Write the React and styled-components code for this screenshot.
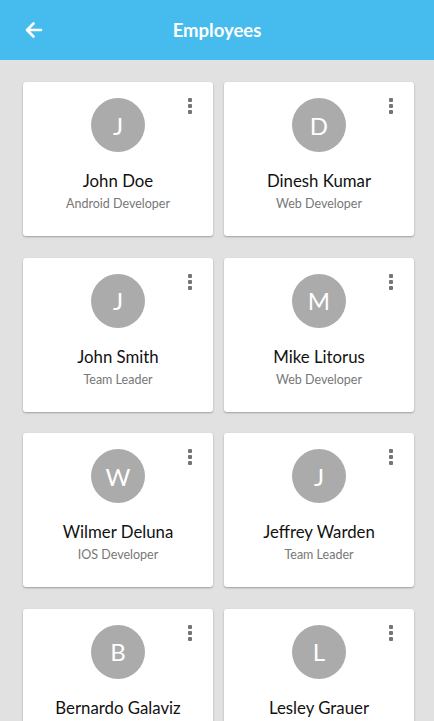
import React from 'react'
import styled, { createGlobalStyle } from 'styled-components'

const GlobalStyle = createGlobalStyle`
    body {
        margin: 0;
        background: #e1e1e1;
        font-family: Lato, "Open Sans", sans-serif;
        overflow: hidden;
    }
`;

const Page = styled.div`
    width: 434px;
    height: 721px;
    display: flex;
    flex-direction: column;
    background: #e1e1e1;
    overflow: hidden;
`;

const Header = styled.header`
    height: 60px;
    flex-shrink: 0;
    background: #46bbee;
    display: flex;
    align-items: center;
    position: relative;
`;

const BackButton = styled.button`
    border: none;
    background: transparent;
    padding: 0;
    margin-left: 24px;
    width: 20px;
    height: 20px;
    display: flex;
    align-items: center;
    justify-content: center;
    color: #fff;
`;

const Title = styled.h1`
    position: absolute;
    left: 0;
    right: 0;
    text-align: center;
    margin: 0;
    font-size: 18.5px;
    font-weight: 700;
    color: #fff;
    pointer-events: none;
`;

const Grid = styled.div`
    display: grid;
    grid-template-columns: 190px 190px;
    column-gap: 11px;
    row-gap: 21.5px;
    padding: 22px 20px 0 23px;
`;

const Card = styled.div`
    position: relative;
    height: 154px;
    background: #fff;
    border-radius: 3px;
    box-shadow: 0 1px 2px rgba(0, 0, 0, 0.3);
    display: flex;
    flex-direction: column;
    align-items: center;
    padding-top: 16px;
    box-sizing: border-box;
`;

const Avatar = styled.div`
    width: 54px;
    height: 54px;
    border-radius: 50%;
    background: #ababab;
    color: #fff;
    font-size: 24px;
    display: flex;
    align-items: center;
    justify-content: center;
`;

const Name = styled.div`
    margin-top: 18px;
    font-size: 16.8px;
    line-height: 21px;
    color: #111;
`;

const Role = styled.div`
    margin-top: 5px;
    font-size: 12.5px;
    line-height: 16px;
    color: #777;
`;

const MenuDots = styled.div`
    position: absolute;
    top: 16px;
    right: 21px;
    display: flex;
    flex-direction: column;
    gap: 2px;
`;

const Dot = styled.span`
    width: 4px;
    height: 4px;
    background: #757575;
    border-radius: 1px;
`;

const employees = [
    { name: 'John Doe', role: 'Android Developer' },
    { name: 'Dinesh Kumar', role: 'Web Developer' },
    { name: 'John Smith', role: 'Team Leader' },
    { name: 'Mike Litorus', role: 'Web Developer' },
    { name: 'Wilmer Deluna', role: 'IOS Developer' },
    { name: 'Jeffrey Warden', role: 'Team Leader' },
    { name: 'Bernardo Galaviz', role: 'Web Developer' },
    { name: 'Lesley Grauer', role: 'Team Leader' },
]

function EmployeeCard({ employee }) {
    return (
        <Card>
            <MenuDots>
                <Dot />
                <Dot />
                <Dot />
            </MenuDots>
            <Avatar>{employee.name[0]}</Avatar>
            <Name>{employee.name}</Name>
            <Role>{employee.role}</Role>
        </Card>
    )
}

export default function App() {
    return (
        <Page>
            <GlobalStyle />
            <Header>
                <BackButton aria-label="Back">
                    <svg width="20" height="20" viewBox="0 0 20 20" fill="none" stroke="#fff" strokeWidth="2.6" strokeLinecap="round" strokeLinejoin="round">
                        <path d="M17 10H3.5M9.5 3.5L3 10l6.5 6.5" />
                    </svg>
                </BackButton>
                <Title>Employees</Title>
            </Header>
            <Grid>
                {employees.map((e) => <EmployeeCard key={e.name} employee={e} />)}
            </Grid>
        </Page>
    )
}
